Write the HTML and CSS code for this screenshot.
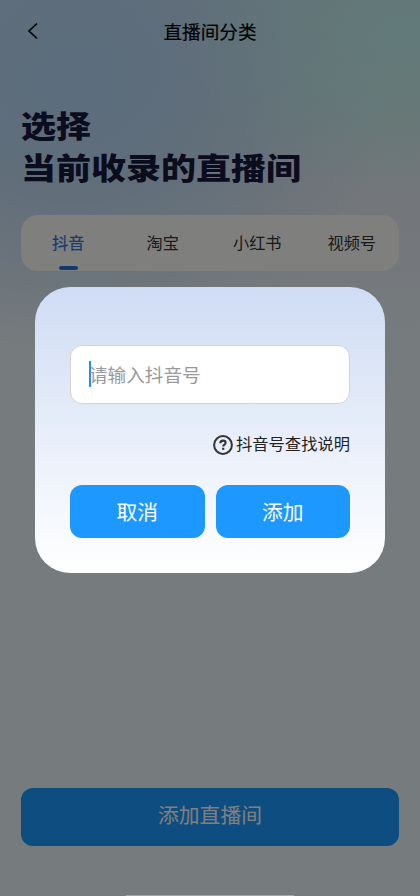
FILE: index.html
```
<!DOCTYPE html>
<html lang="zh-CN">
<head>
<meta charset="utf-8">
<meta name="viewport" content="width=device-width, initial-scale=1">
<title>直播间分类</title>
<link rel="stylesheet" href="styles.css">
</head>
<body>
<div class="screen">
  <header class="navbar">
    <svg class="back" width="12" height="18" viewBox="0 0 12 18"><path d="M10 1.5 2 9l8 7.5" fill="none" stroke="currentColor" stroke-width="1.7"/></svg>
    <h1 class="title">直播间分类</h1>
  </header>
  <h2 class="heading">选择<br>当前收录的直播间</h2>
  <nav class="tabs">
    <span class="tab active">抖音</span>
    <span class="tab">淘宝</span>
    <span class="tab">小红书</span>
    <span class="tab">视频号</span>
  </nav>
  <div class="add-room">添加直播间</div>
  <div class="home-bar"></div>
</div>
<div class="overlay">
  <section class="dialog">
    <div class="field"><i class="caret"></i><span>请输入抖音号</span></div>
    <div class="help">
      <svg width="20" height="20" viewBox="0 0 20 20" fill="none" stroke="currentColor"><circle cx="10" cy="10" r="8.9" stroke-width="2"/><path d="M7.3 8.2c0-1.7 1.1-2.6 2.7-2.6s2.6.9 2.6 2.2c0 1.8-2.4 1.8-2.4 3.7" stroke-width="2.1"/><path d="M9.1 13.8h2.2" stroke-width="2.1"/></svg>
      <span>抖音号查找说明</span>
    </div>
    <div class="actions">
      <div class="btn">取消</div>
      <div class="btn">添加</div>
    </div>
  </section>
</div>
<div class="gesture-bar"></div>
</body>
</html>
```
FILE: styles.css
```
* { box-sizing: border-box; margin: 0; padding: 0; }
body {
  position: relative;
  width: 420px;
  height: 896px;
  overflow: hidden;
  font-family: "Noto Sans CJK SC", sans-serif;
}
.screen {
  display: flex;
  flex-direction: column;
  height: 896px;
  padding: 0 21px;
  background:
    radial-gradient(ellipse 220px 150px at 410px 40px, rgba(188, 252, 246, .65), rgba(188, 252, 246, 0)),
    radial-gradient(ellipse 320px 270px at 75px 80px, #b6dafc 0%, rgba(188, 218, 246, .85) 40%, rgba(216, 232, 250, 0) 100%),
    radial-gradient(ellipse 240px 90px at 370px 215px, rgba(236, 236, 248, .5), rgba(236, 236, 248, 0)),
    linear-gradient(#cee8ee 0, #d8ecec 110px, #e6eef4 220px, #ecf6fb 330px, #ecf6fc 100%);
}
.navbar {
  display: grid;
  grid-template-columns: 24px 1fr 24px;
  align-items: center;
  height: 62px;
  color: #000;
}
.back { margin-left: 6px; }
.title {
  font-size: 18.6px;
  line-height: 28px;
  font-weight: 400;
  -webkit-text-stroke: .2px currentColor;
  text-align: center;
}
.heading {
  margin-top: 33px;
  font-size: 35px;
  line-height: 50px;
  font-weight: 900;
  color: #18183f;
  height: 100px;
  white-space: nowrap;
  transform: scaleY(.84);
}
.tabs {
  display: grid;
  grid-template-columns: repeat(4, 1fr);
  height: 56px;
  margin-top: 20px;
  border-radius: 17px;
  background: #fffffd;
}
.tab {
  display: flex;
  flex-direction: column;
  align-items: center;
  padding-top: 15px;
  font-size: 16.2px;
  line-height: 25px;
  color: #333;
}
.active { color: #2c76dc; -webkit-text-stroke: .2px currentColor; }
.active::after {
  content: "";
  width: 19px;
  height: 4px;
  margin-top: 11px;
  border-radius: 2px;
  background: #2474dc;
}
.add-room {
  height: 58px;
  margin-top: auto;
  margin-bottom: 50px;
  border-radius: 12px;
  background: #1c9aff;
  color: #fff;
  font-size: 20.8px;
  line-height: 53px;
  text-align: center;
}
.home-bar { display: none; }
.gesture-bar {
  position: absolute;
  left: 126px;
  bottom: 0;
  width: 168px;
  height: 1px;
  background: #a2a6a9;
}
.overlay {
  position: absolute;
  inset: 0;
  display: flex;
  justify-content: center;
  align-items: flex-start;
  padding-top: 287px;
  background: rgba(0, 0, 0, .5);
}
.dialog {
  width: 350px;
  height: 286px;
  padding: 58px 35px 0;
  border-radius: 35px;
  background: linear-gradient(#cfdcf4, #fff);
}
.field {
  display: flex;
  align-items: center;
  height: 59px;
  padding-left: 18px;
  border: 1.5px solid #d4d4d4;
  border-radius: 12px;
  background: #fff;
  color: #999;
  font-size: 18.6px;
  line-height: 28px;
}
.field span { margin-top: -2px; }
.caret {
  width: 2px;
  height: 26px;
  margin-right: -2px;
  margin-top: -2px;
  background: #1c90f4;
}
.help {
  display: flex;
  justify-content: flex-end;
  align-items: center;
  gap: 3px;
  height: 24px;
  margin-top: 27px;
  color: #222;
  font-size: 16.3px;
  line-height: 24px;
}
.help svg { margin-top: 3px; color: #333; }
.actions {
  display: grid;
  grid-template-columns: 1fr 1fr;
  gap: 11px;
  margin-top: 30px;
}
.btn {
  height: 53px;
  border-radius: 12px;
  background: #1c98ff;
  color: #fff;
  font-size: 20.8px;
  line-height: 52px;
  text-align: center;
}
```
